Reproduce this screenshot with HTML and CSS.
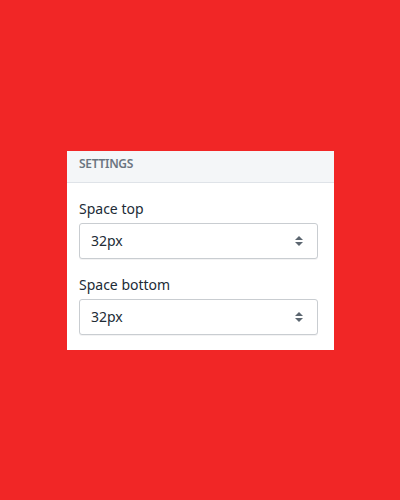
FILE: index.html
```html
<!DOCTYPE html>
<html>
<head>
<meta charset="utf-8">
<link rel="stylesheet" href="styles.css">
</head>
<body>
<div class="stage">
  <div class="panel">
    <div class="panel-header">Settings</div>
    <div class="panel-body">
      <div class="field">
        <label class="field-label">Space top</label>
        <div class="select">
          <span class="select-value">32px</span>
          <svg class="select-arrows" width="10" height="14" viewBox="0 0 10 14"><path d="M5 2 L9 6 H1 Z" fill="#5c6670"/><path d="M1 8 H9 L5 12 Z" fill="#5c6670"/></svg>
        </div>
      </div>
      <div class="field">
        <label class="field-label">Space bottom</label>
        <div class="select">
          <span class="select-value">32px</span>
          <svg class="select-arrows" width="10" height="14" viewBox="0 0 10 14"><path d="M5 2 L9 6 H1 Z" fill="#5c6670"/><path d="M1 8 H9 L5 12 Z" fill="#5c6670"/></svg>
        </div>
      </div>
    </div>
  </div>
</div>
</body>
</html>
```
FILE: styles.css
```css
html, body {
  margin: 0;
  padding: 0;
}
body {
  background: #f12626;
  font-family: "Noto Sans", "Open Sans", sans-serif;
  color: #212b36;
}
.stage {
  width: 400px;
  height: 500px;
  display: flex;
  justify-content: center;
  align-items: center;
}
.panel {
  width: 267px;
  height: 199px;
  background: #ffffff;
  box-sizing: border-box;
  margin-left: 1px;
}
.panel-header {
  background: #f4f6f8;
  border-bottom: 1px solid #dfe3e8;
  padding: 5px 12px 0;
  box-sizing: border-box;
  height: 32px;
  font-size: 12px;
  line-height: 16px;
  font-weight: 600;
  text-transform: uppercase;
  color: #6b7580;
  letter-spacing: -0.3px;
}
.panel-body {
  padding: 16px 16px 15px 12px;
  display: flex;
  flex-direction: column;
  gap: 16px;
}
.field {
  display: flex;
  flex-direction: column;
  gap: 4px;
}
.field-label {
  font-size: 14px;
  line-height: 20px;
  color: #212b36;
}
.select {
  height: 36px;
  box-sizing: border-box;
  border: 1px solid #c9cdd1;
  border-radius: 3px;
  box-shadow: 0 1px 0 rgba(22, 29, 37, 0.05);
  display: flex;
  align-items: center;
  justify-content: space-between;
  padding: 0 13px 0 11px;
  background: #fff;
}
.select-value {
  font-size: 14px;
  color: #212b36;
}
.select-arrows {
  display: block;
}
```
